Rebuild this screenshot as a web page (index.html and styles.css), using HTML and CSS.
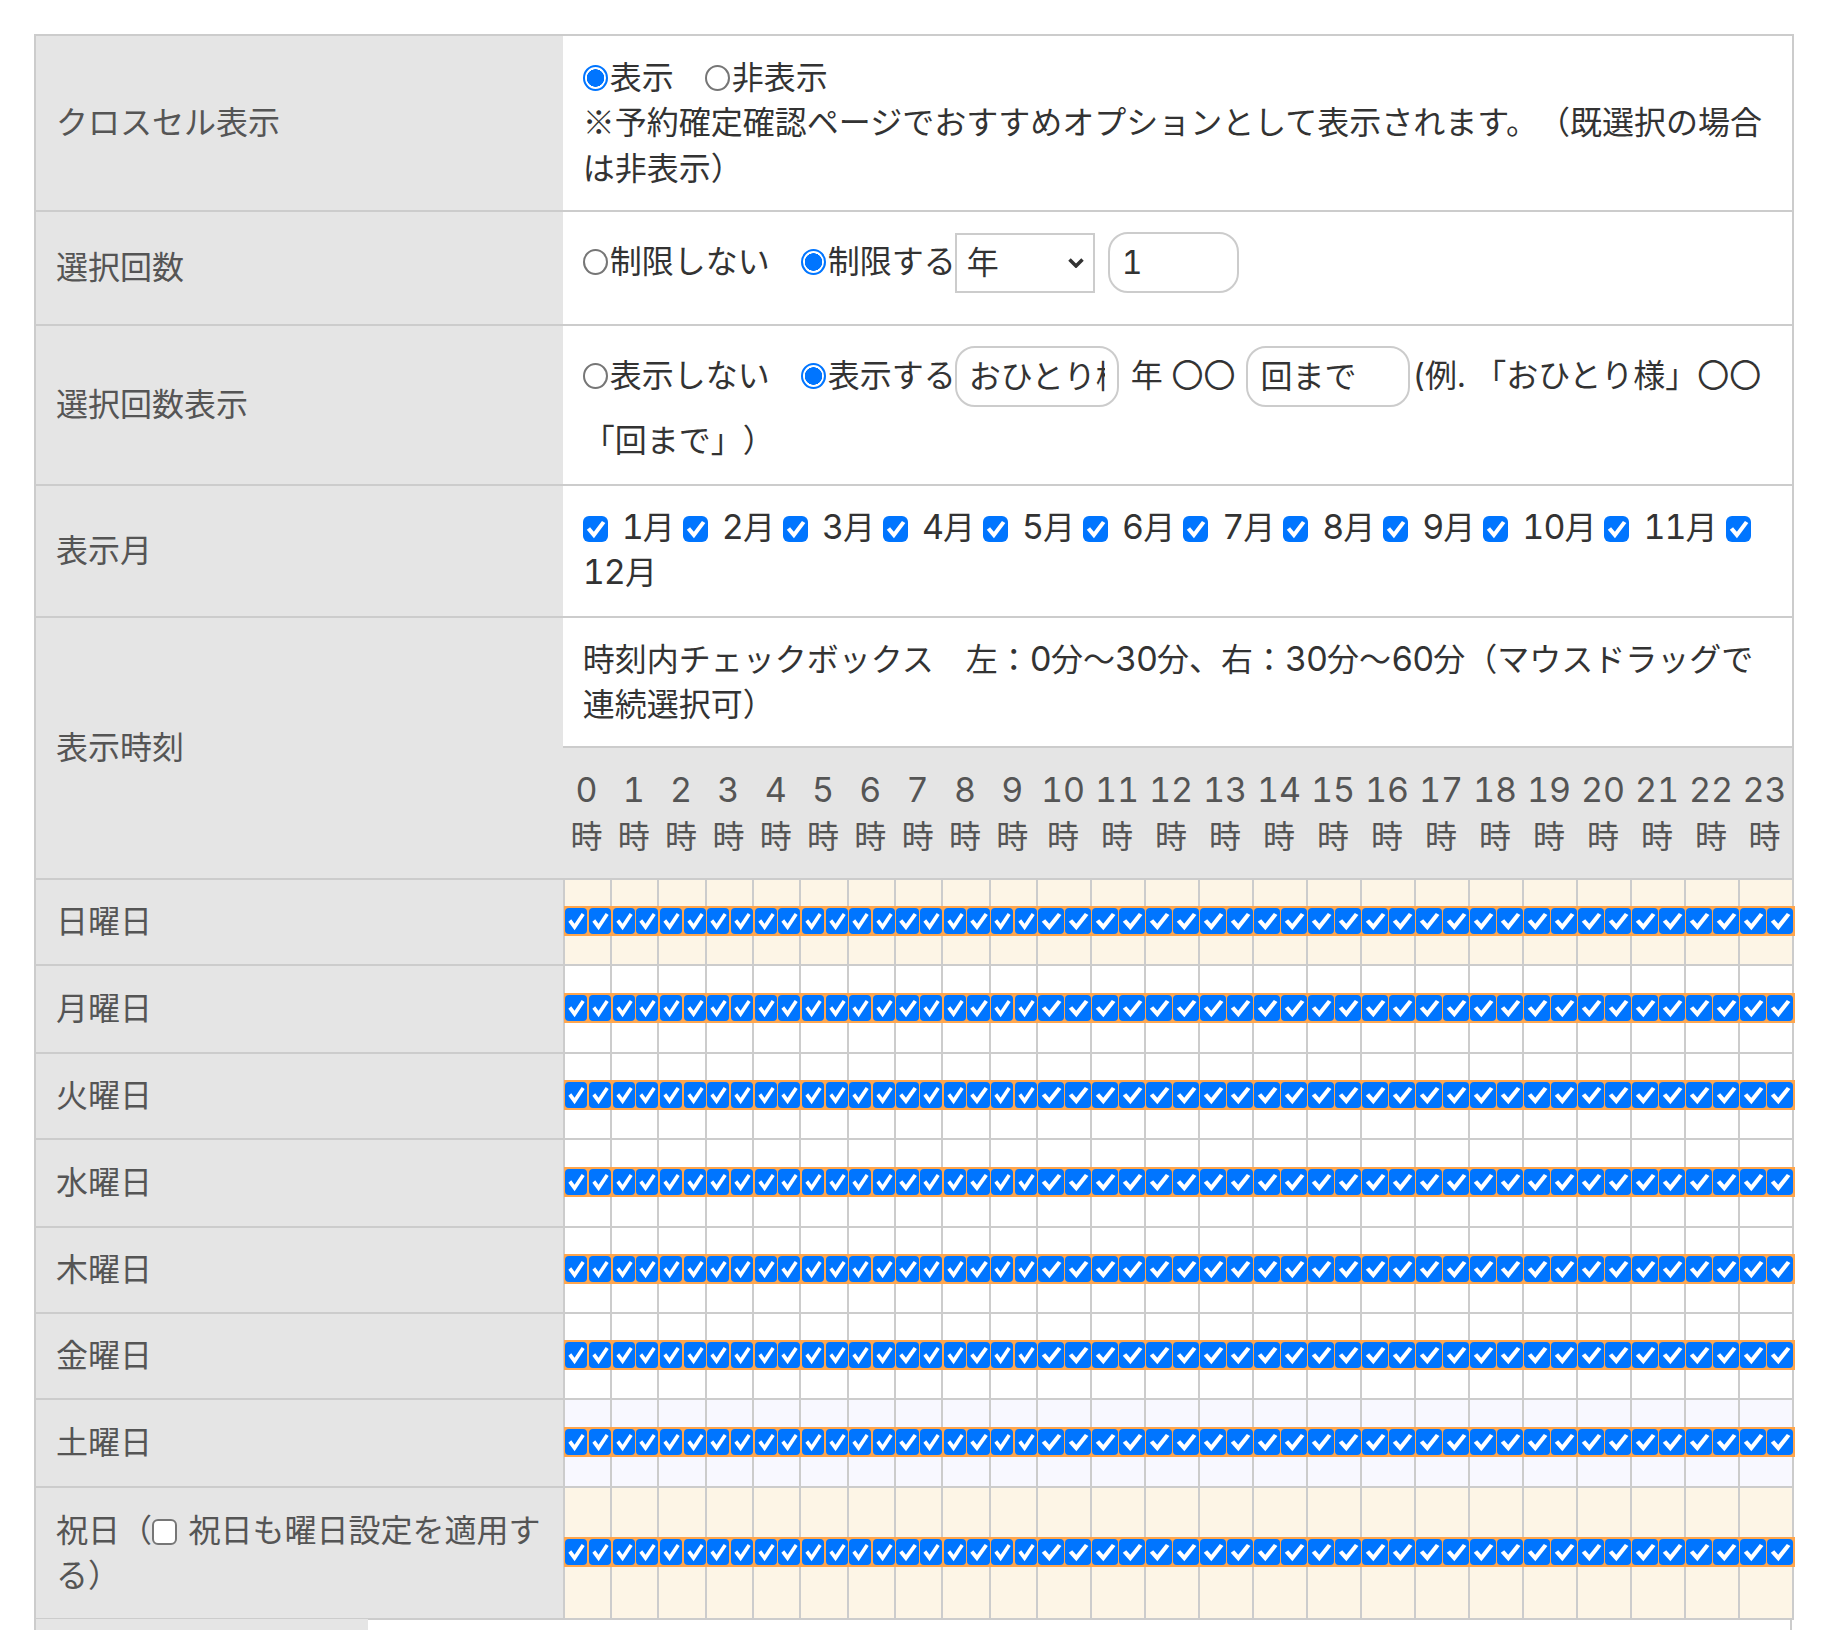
FILE: index.html
```html
<!DOCTYPE html>
<html lang="ja">
<head>
<meta charset="utf-8">
<title>オプション設定</title>
<link rel="stylesheet" href="styles.css">
</head>
<body>
<div class="page">
<table class="grid">
<colgroup>
<col class="c-label">
<col class="c-s"><col class="c-s"><col class="c-s"><col class="c-s"><col class="c-s"><col class="c-s"><col class="c-s"><col class="c-s"><col class="c-s"><col class="c-s">
<col class="c-w"><col class="c-w"><col class="c-w"><col class="c-w"><col class="c-w"><col class="c-w"><col class="c-w"><col class="c-w"><col class="c-w"><col class="c-w"><col class="c-w"><col class="c-w"><col class="c-w"><col class="c-w">
</colgroup>
<tbody>
<tr class="r-cross">
<th>クロスセル表示</th>
<td colspan="24" class="body">
<label class="opt"><input type="radio" name="cross" checked>表示</label><label class="opt"><input type="radio" name="cross">非表示</label><br>
<span class="cjk">※</span>予約確定確認ページでおすすめオプションとして表示されます。（既選択の場合<br>は非表示）
</td>
</tr>
<tr class="r-limit">
<th>選択回数</th>
<td colspan="24" class="body ctl">
<label class="opt"><input type="radio" name="limit">制限しない</label><label class="opt tight"><input type="radio" name="limit" checked>制限する</label><select class="sel"><option>年</option></select><input class="txt txt-n" type="text" value="1">
</td>
</tr>
<tr class="r-show">
<th>選択回数表示</th>
<td colspan="24" class="body ctl">
<label class="opt"><input type="radio" name="show">表示しない</label><label class="opt tight"><input type="radio" name="show" checked>表示する</label><input class="txt txt-w" type="text" value="おひとり様"><span class="mid">年 〇〇</span><input class="txt txt-w" type="text" value="回まで"><span class="ex">(例. 「おひとり様」〇〇</span><br><span class="ex2">「回まで」）</span>
</td>
</tr>
<tr class="r-month">
<th>表示月</th>
<td colspan="24" class="body">
<label class="mon"><input type="checkbox" checked><span class="num">1</span>月</label><label class="mon"><input type="checkbox" checked><span class="num">2</span>月</label><label class="mon"><input type="checkbox" checked><span class="num">3</span>月</label><label class="mon"><input type="checkbox" checked><span class="num">4</span>月</label><label class="mon"><input type="checkbox" checked><span class="num">5</span>月</label><label class="mon"><input type="checkbox" checked><span class="num">6</span>月</label><label class="mon"><input type="checkbox" checked><span class="num">7</span>月</label><label class="mon"><input type="checkbox" checked><span class="num">8</span>月</label><label class="mon"><input type="checkbox" checked><span class="num">9</span>月</label><label class="mon"><input type="checkbox" checked><span class="num">10</span>月</label><label class="mon"><input type="checkbox" checked><span class="num">11</span>月</label><input class="mon-last" type="checkbox" checked><br><span class="num">12</span>月
</td>
</tr>
<tr class="r-note">
<th rowspan="2">表示時刻</th>
<td colspan="24" class="body">時刻内チェックボックス　左：<span class="num">0</span>分〜<span class="num">30</span>分、右：<span class="num">30</span>分〜<span class="num">60</span>分（マウスドラッグで<br>連続選択可）</td>
</tr>
<tr class="r-hours">
<td class="hr">0<br>時</td><td class="hr">1<br>時</td><td class="hr">2<br>時</td><td class="hr">3<br>時</td><td class="hr">4<br>時</td><td class="hr">5<br>時</td><td class="hr">6<br>時</td><td class="hr">7<br>時</td><td class="hr">8<br>時</td><td class="hr">9<br>時</td><td class="hr">10<br>時</td><td class="hr">11<br>時</td><td class="hr">12<br>時</td><td class="hr">13<br>時</td><td class="hr">14<br>時</td><td class="hr">15<br>時</td><td class="hr">16<br>時</td><td class="hr">17<br>時</td><td class="hr">18<br>時</td><td class="hr">19<br>時</td><td class="hr">20<br>時</td><td class="hr">21<br>時</td><td class="hr">22<br>時</td><td class="hr">23<br>時</td>
</tr>
<tr class="day holiday"><th>日曜日</th></tr>
<tr class="day t"><th>月曜日</th></tr>
<tr class="day"><th>火曜日</th></tr>
<tr class="day t"><th>水曜日</th></tr>
<tr class="day"><th>木曜日</th></tr>
<tr class="day"><th>金曜日</th></tr>
<tr class="day t sat"><th>土曜日</th></tr>
<tr class="day holiday tall"><th>祝日（<input class="plain" type="checkbox"> 祝日も曜日設定を適用する）</th></tr>
</tbody>
</table>
<div class="next"><div class="next-label"></div></div>
</div>
<script src="app.js"></script>
</body>
</html>
```

FILE: styles.css
```css
* { box-sizing: border-box; }
html, body { margin: 0; padding: 0; background: #fff; }
body {
  font-family: Inter, "Noto Sans CJK JP", sans-serif;
  font-size: 32px;
  line-height: 45.5px;
  color: #333;
  text-spacing-trim: space-all;
  font-variant-numeric: tabular-nums;
}
.page { height: 1630px; padding: 34px 0 0 34px; overflow: hidden; }
.cjk { font-family: "Noto Sans CJK JP", sans-serif; line-height: 0; }
.num { font-size: 34px; line-height: 0; letter-spacing: -1px; }

.grid { border-collapse: collapse; table-layout: fixed; width: 1758px; }
.c-label { width: 528.8px; }
.c-s { width: 47.32px; }
.c-w { width: 54px; }

.grid th, .grid td { border: 2px solid #ccc; padding: 0; }
.grid th {
  background: #e5e5e5;
  color: #555;
  font-weight: 400;
  text-align: left;
  padding: 0 20px;
  vertical-align: middle;
  border-right: 0;
}
.grid .body {
  vertical-align: top;
  padding: 18.5px 20px 0 18px;
  white-space: nowrap;
  border-left: 2px solid #fff;
}
.grid .ctl { padding-top: 20px; }

.r-cross { height: 176px; }
.r-limit { height: 114px; }
.r-show { height: 160px; }
.r-month { height: 132px; }
.r-note { height: 130px; }
.r-hours { height: 132px; }
.day { height: 86px; }
.day.t { height: 88px; }
.day.tall { height: 132px; }

input[type="radio"] {
  appearance: none;
  margin: 0;
  width: 25px;
  height: 26px;
  vertical-align: -2px;
  border: 2px solid #767676;
  border-radius: 50%;
  background: #fff;
}
input[type="radio"]:checked {
  border-color: #0075ff;
  background: radial-gradient(circle, #0075ff 0 8.5px, #fff 9px);
}
input[type="checkbox"] {
  appearance: none;
  margin: 0;
  width: 25px;
  height: 26px;
  vertical-align: -3px;
  border: 2px solid #767676;
  border-radius: 6px;
  background: #fff;
}
input[type="checkbox"]:checked {
  border: 0;
  background: #0075ff url("data:image/svg+xml,%3Csvg xmlns='http://www.w3.org/2000/svg' viewBox='0 0 23 26' preserveAspectRatio='none'%3E%3Cpath d='M5 12.5l5 6.5 9-13' fill='none' stroke='%23fff' stroke-width='3.8'/%3E%3C/svg%3E") center / 100% 100% no-repeat;
}
.plain { margin-right: 3px !important; }

.opt { margin-right: 31px; }
.opt.tight { margin-right: -1px; }
.opt input { margin-right: 2px; }

.sel {
  appearance: none;
  width: 140px;
  height: 60px;
  font: inherit;
  line-height: normal;
  color: #333;
  border: 2px solid #ccc;
  border-radius: 0;
  background: #fff url("data:image/svg+xml,%3Csvg xmlns='http://www.w3.org/2000/svg' viewBox='0 0 16 10'%3E%3Cpath d='M1.5 1.5L8 8l6.5-6.5' fill='none' stroke='%23333' stroke-width='3.5'/%3E%3C/svg%3E") right 9px center / 16px 10px no-repeat;
  padding: 0 0 0 10px;
  margin-bottom: 3px;
  vertical-align: middle;
}
.txt {
  height: 61px;
  font: inherit;
  color: #333;
  border: 2px solid #ccc;
  border-radius: 20px;
  padding: 0 12px;
  background: #fff;
  outline: none;
  margin-bottom: 3px;
  vertical-align: middle;
}
.txt-n { width: 131px; margin-left: 13px; }
.txt-w { width: 164px; padding-bottom: 6px; }
.mid { margin: 0 11px 0 12px; }
.ex { margin-left: 2px; }
.ex2 { display: inline-block; margin-top: 8px; }

.mon { margin-right: 8px; }
.mon input { margin-right: 14px; }

.grid .r-hours .hr {
  background: #e5e5e5;
  color: #555;
  line-height: 47px;
  text-align: center;
  vertical-align: middle;
  padding-right: 2px;
  border-left: 0;
  border-right: 0;
}
.r-hours .hr::first-line { font-size: 34px; }
.grid .r-hours .hr:last-child { border-right: 2px solid #ccc; }

.grid .slot { vertical-align: middle; }
.holiday .slot { background: #fdf5e6; }
.sat .slot { background: #f8f8ff; }

.band {
  position: relative;
  display: flex;
  gap: 1.5px;
  padding: 2px 0 2px 1.5px;
  margin: 0 -1px 2px;
  background: #ffa64d;
}
.slot:last-child .band { margin-right: -3px; padding-right: 2px; }
.band input[type="checkbox"] { flex: 1 1 0; min-width: 0; width: auto; height: 26px; border-radius: 4px; }

.next {
  height: 40px;
  border-left: 2px solid #ccc;
  border-right: 2px solid #ccc;
  width: 1758px;
  margin-top: -1px;
}
.next-label { width: 332px; height: 100%; background: #e5e5e5; }
```

FILE: app.js
```js
document.querySelectorAll('tr.day').forEach(function (row) {
  for (var h = 0; h < 24; h++) {
    var cell = document.createElement('td');
    cell.className = 'slot';
    var band = document.createElement('div');
    band.className = 'band';
    for (var half = 0; half < 2; half++) {
      var box = document.createElement('input');
      box.type = 'checkbox';
      box.checked = true;
      band.appendChild(box);
    }
    cell.appendChild(band);
    row.appendChild(cell);
  }
});
```
